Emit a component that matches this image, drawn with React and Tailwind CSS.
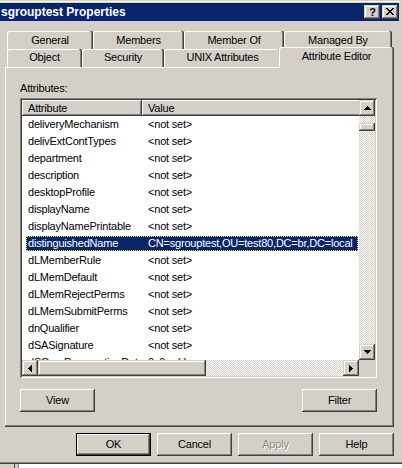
import React from "react";

const PUSH =
  "shadow-[inset_-1px_-1px_#404040,inset_1px_1px_#ffffff,inset_-2px_-2px_#808080,inset_2px_2px_#d4d0c8]";
const SCROLLBTN =
  "shadow-[inset_-1px_-1px_#404040,inset_1px_1px_#d4d0c8,inset_-2px_-2px_#808080,inset_2px_2px_#ffffff]";
const HEADER =
  "shadow-[inset_-1px_-1px_#404040,inset_1px_1px_#ffffff,inset_-2px_-2px_#808080]";
const TAB =
  "shadow-[inset_-1px_0_#404040,inset_-2px_0_#808080,inset_1px_1px_#ffffff]";
const CHECKER =
  "bg-[image:repeating-conic-gradient(#d4d0c8_0%_25%,#ffffff_0%_50%)] bg-[length:2px_2px]";

function UpArrow() {
  return (
    <svg width="7" height="4" viewBox="0 0 7 4" shapeRendering="crispEdges">
      <path d="M3 0h1v1h1v1h1v1h1v1H0V3h1V2h1V1h1z" fill="#000" />
    </svg>
  );
}
function DownArrow() {
  return (
    <svg width="7" height="4" viewBox="0 0 7 4" shapeRendering="crispEdges">
      <path d="M0 0H7v1h-1v1h-1v1h-1v1h-1V3h-1V2h-1V1H0z" fill="#000" />
    </svg>
  );
}
function LeftArrow() {
  return (
    <svg width="4" height="7" viewBox="0 0 4 7" shapeRendering="crispEdges">
      <path d="M3 0h1v7h-1v-1h-1v-1h-1v-1h-1v-1h1v-1h1v-1h1z" fill="#000" />
    </svg>
  );
}
function RightArrow() {
  return (
    <svg width="4" height="7" viewBox="0 0 4 7" shapeRendering="crispEdges">
      <path d="M0 0h1v1h1v1h1v1h1v1h-1v1h-1v1h-1v1H0z" fill="#000" />
    </svg>
  );
}
function CloseGlyph() {
  const px = [
    [0, 0, 2], [6, 0, 2],
    [1, 1, 2], [5, 1, 2],
    [2, 2, 4],
    [3, 3, 2],
    [2, 4, 4],
    [1, 5, 2], [5, 5, 2],
    [0, 6, 2], [6, 6, 2],
  ];
  return (
    <svg width="8" height="7" viewBox="0 0 8 7" shapeRendering="crispEdges">
      {px.map(([x, y, w], i) => (
        <rect key={i} x={x} y={y} width={w} height="1" fill="#000" />
      ))}
    </svg>
  );
}

function Tab({ className, pad, children }) {
  return (
    <div
      className={`${className} ${TAB} ${pad} shrink-0 rounded-t-[2px] bg-[#d4d0c8] text-center leading-[13px] whitespace-nowrap`}
    >
      {children}
    </div>
  );
}

function PushButton({ children, disabled, isDefault }) {
  return (
    <div
      className={`w-[75px] h-[23px] shrink-0 flex items-center justify-center bg-[#d4d0c8] ${PUSH} ${
        isDefault ? "border border-black" : ""
      } ${disabled ? "text-[#8c8a85] [text-shadow:1px_1px_0_#ffffff]" : ""}`}
    >
      {children}
    </div>
  );
}

const rows = [
  ["deliveryMechanism", "<not set>"],
  ["delivExtContTypes", "<not set>"],
  ["department", "<not set>"],
  ["description", "<not set>"],
  ["desktopProfile", "<not set>"],
  ["displayName", "<not set>"],
  ["displayNamePrintable", "<not set>"],
  ["distinguishedName", "CN=sgrouptest,OU=test80,DC=br,DC=local", true],
  ["dLMemberRule", "<not set>"],
  ["dLMemDefault", "<not set>"],
  ["dLMemRejectPerms", "<not set>"],
  ["dLMemSubmitPerms", "<not set>"],
  ["dnQualifier", "<not set>"],
  ["dSASignature", "<not set>"],
  ["dSCorePropagationData", "0x0 = (  )"],
];

export default function App() {
  return (
    <div className="w-[402px] h-[468px] bg-[#d4d0c8] overflow-hidden flex flex-col text-[11px] tracking-[-0.2px] text-black font-['Liberation_Sans',Arial,sans-serif]">
      <div className="h-[1px] shrink-0" />
      <div className="h-[1px] shrink-0 bg-white mr-[2px]" />
      <div className="h-[1px] shrink-0" />

      {/* Title bar */}
      <div className="h-[18px] shrink-0 bg-[#0a246a] mr-[3px] flex items-center">
        <span className="pl-[1px] font-bold text-[12px] tracking-normal leading-[18px] text-white whitespace-nowrap">
          sgrouptest Properties
        </span>
        <div className="ml-auto mr-[1px] flex gap-[2px]">
          <div
            className={`w-[16px] h-[14px] bg-[#d4d0c8] ${SCROLLBTN} flex items-center justify-center font-bold text-[11px] tracking-normal leading-[14px] pl-[1px]`}
          >
            ?
          </div>
          <div
            className={`w-[16px] h-[14px] bg-[#d4d0c8] ${SCROLLBTN} flex items-center justify-center pb-[1px]`}
          >
            <CloseGlyph />
          </div>
        </div>
      </div>

      {/* Tabs */}
      <div className="pt-[10px] pl-[7px] shrink-0">
        <div className="flex h-[18px]">
          <Tab className="w-[86px] h-[18px]" pad="pt-[3px]">General</Tab>
          <Tab className="w-[91px] h-[18px]" pad="pt-[3px]">Members</Tab>
          <Tab className="w-[100px] h-[18px]" pad="pt-[3px]">Member Of</Tab>
          <Tab className="w-[108px] h-[18px]" pad="pt-[3px]">Managed By</Tab>
        </div>
        <div className="flex h-[18px] items-start">
          <Tab className="w-[75px] h-[18px]" pad="pt-[2px]">Object</Tab>
          <Tab className="w-[82px] h-[18px]" pad="pt-[2px]">Security</Tab>
          <Tab className="w-[117px] h-[18px]" pad="pt-[2px]">UNIX Attributes</Tab>
          <Tab
            className="w-[115px] h-[21px] -ml-[2px] -mt-[2px] relative z-10"
            pad="pt-[3px]"
          >
            Attribute Editor
          </Tab>
        </div>
      </div>

      {/* Panel */}
      <div className="ml-[5px] w-[389px] h-[360px] shrink-0 pt-[15px] pl-[15px] shadow-[inset_-1px_-1px_#404040,inset_-2px_-2px_#808080,inset_1px_1px_#ffffff]">
        <div className="leading-[13px]">Attributes:</div>

        <div className="mt-[3px] w-[357px] h-[280px] p-[2px] shadow-[inset_1px_1px_#808080,inset_-1px_-1px_#ffffff,inset_2px_2px_#404040,inset_-2px_-2px_#d4d0c8]">
          <div className="grid grid-cols-[337px_16px] grid-rows-[260px_16px] w-[353px] h-[276px]">
            {/* List content */}
            <div className="bg-white overflow-hidden flex flex-col">
              <div className="flex h-[16px] shrink-0 leading-[16px] bg-[#d4d0c8]">
                <div className={`w-[120px] shrink-0 pl-[6px] ${HEADER}`}>Attribute</div>
                <div className={`w-[400px] shrink-0 pl-[6px] ${HEADER}`}>Value</div>
              </div>
              {rows.map(([name, value, sel]) => (
                <div key={name} className="h-[17px] shrink-0 py-[1px] pl-[4px] pr-[1px]">
                  <div
                    className={`h-[15px] flex leading-[15px] whitespace-nowrap ${
                      sel
                        ? "bg-[#0a246a] text-white outline-1 outline-dotted outline-[#f5db95] -outline-offset-1"
                        : ""
                    }`}
                  >
                    <span className="w-[116px] shrink-0 pl-[2px]">{name}</span>
                    <span className="pl-[6px]">{value}</span>
                  </div>
                </div>
              ))}
            </div>

            {/* Vertical scrollbar */}
            <div className="flex flex-col">
              <div className={`h-[16px] shrink-0 bg-[#d4d0c8] ${SCROLLBTN} flex items-center justify-center pb-[1px]`}>
                <UpArrow />
              </div>
              <div className={`flex-1 ${CHECKER}`}>
                <div className={`mt-[7px] h-[8px] bg-[#d4d0c8] ${SCROLLBTN}`} />
              </div>
              <div className={`h-[16px] shrink-0 bg-[#d4d0c8] ${SCROLLBTN} flex items-center justify-center`}>
                <DownArrow />
              </div>
            </div>

            {/* Horizontal scrollbar */}
            <div className="flex">
              <div className={`w-[16px] shrink-0 bg-[#d4d0c8] ${SCROLLBTN} flex items-center justify-center pr-[1px]`}>
                <LeftArrow />
              </div>
              <div className={`w-[168px] shrink-0 bg-[#d4d0c8] ${SCROLLBTN}`} />
              <div className={`flex-1 ${CHECKER}`} />
              <div className={`w-[16px] shrink-0 bg-[#d4d0c8] ${SCROLLBTN} flex items-center justify-center`}>
                <RightArrow />
              </div>
            </div>

            <div className="bg-[#d4d0c8]" />
          </div>
        </div>

        <div className="mt-[11px] w-[357px] flex justify-between">
          <PushButton>View</PushButton>
          <PushButton>Filter</PushButton>
        </div>
      </div>

      {/* Dialog buttons */}
      <div className="mt-[6px] pl-[76px] flex gap-[6px] shrink-0">
        <PushButton isDefault>OK</PushButton>
        <PushButton>Cancel</PushButton>
        <PushButton disabled>Apply</PushButton>
        <PushButton>Help</PushButton>
      </div>

      <div className="h-[6px] shrink-0" />
      <div className="h-[1px] shrink-0 bg-[#808080]" />
      <div className="h-[1px] shrink-0 bg-[#404040]" />
      <div className="h-[4px] shrink-0 flex">
        <div className="w-[14px] bg-[#d4d0c8]" />
        <div className="w-[1px] bg-[#404040]" />
        <div className="w-[3px] bg-[#d4d0c8]" />
        <div className="w-[1px] bg-[#808080]" />
        <div className="flex-1 bg-white" />
      </div>
    </div>
  );
}
